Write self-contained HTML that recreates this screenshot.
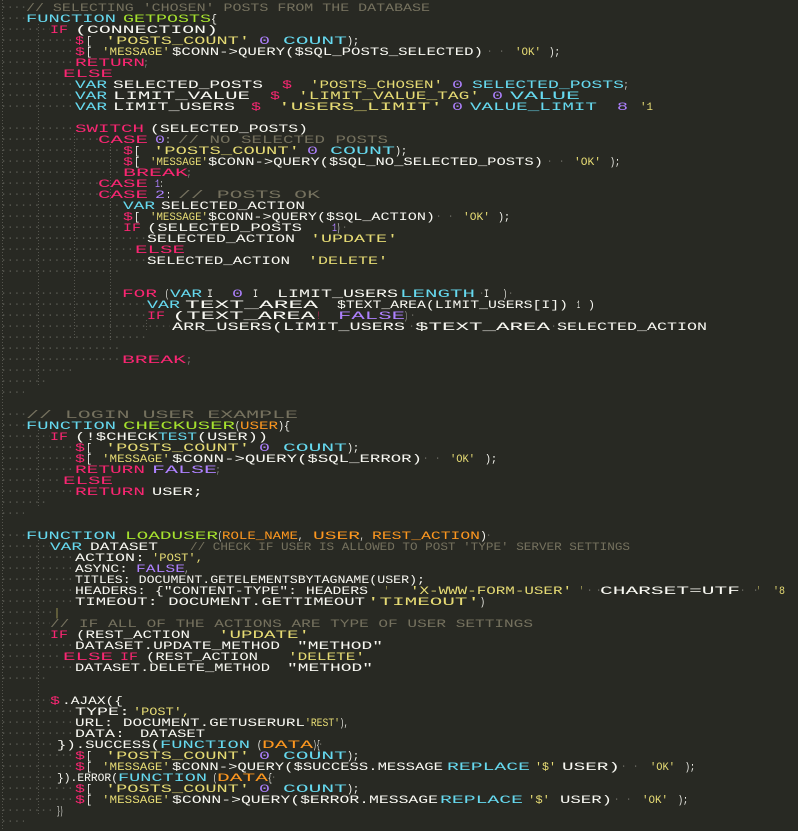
<!DOCTYPE html>
<html lang="en"><head><meta charset="utf-8"><title>Code</title>
<style>
html,body{margin:0;padding:0;background:#282923;width:798px;height:831px;overflow:hidden}
svg{display:block}
text{font-family:"Liberation Mono",monospace;font-size:11px;text-transform:uppercase;white-space:pre}
.c{fill:#66d9ef}.p{fill:#f92672}.y{fill:#e6db74}.w{fill:#f8f8f2}.v{fill:#ae81ff}.g{fill:#a6e22e}.o{fill:#fd971f}.m{fill:#75715e}
</style></head><body>
<svg xmlns="http://www.w3.org/2000/svg" width="798" height="831" viewBox="0 0 798 831">
<defs><pattern id="d" patternUnits="userSpaceOnUse" x="0" y="0" width="6.667" height="11"><rect x="3" y="6.5" width="1.2" height="1.2" fill="#6b6b63"/></pattern></defs>
<g stroke="#55554e" stroke-width="1" stroke-dasharray="1 2">
<path d="M2.5 0V831M38.5 24V386M38.5 430V508M38.5 540V815M74.5 133V340M110.5 144V340M146.5 320V332"/>
</g>
<g fill="url(#d)">
<rect y="0" width="26" height="11"/><rect y="11" width="26" height="11"/><rect y="22" width="50" height="11"/><rect y="33" width="75" height="11"/><rect y="44" width="75" height="11"/><rect y="55" width="75" height="11"/><rect y="66" width="62" height="11"/><rect y="77" width="75" height="11"/><rect y="88" width="75" height="11"/><rect y="99" width="75" height="11"/>
<rect y="121" width="75" height="11"/><rect y="132" width="98" height="11"/><rect y="143" width="122" height="11"/><rect y="154" width="122" height="11"/><rect y="165" width="122" height="11"/><rect y="176" width="98" height="11"/><rect y="187" width="98" height="11"/><rect y="198" width="122" height="11"/><rect y="209" width="122" height="11"/><rect y="220" width="122" height="11"/><rect y="231" width="146" height="11"/><rect y="242" width="134" height="11"/><rect y="253" width="146" height="11"/><rect y="264" width="120" height="11"/>
<rect y="286" width="122" height="11"/><rect y="297" width="146" height="11"/><rect y="308" width="146" height="11"/><rect y="319" width="170" height="11"/><rect y="330" width="145" height="11"/><rect y="341" width="120" height="11"/><rect y="352" width="122" height="11"/><rect y="363" width="72" height="11"/><rect y="374" width="48" height="11"/><rect y="385" width="24" height="11"/>
<rect y="407" width="26" height="11"/><rect y="418" width="26" height="11"/><rect y="429" width="50" height="11"/><rect y="440" width="75" height="11"/><rect y="451" width="75" height="11"/><rect y="462" width="75" height="11"/><rect y="473" width="62" height="11"/><rect y="484" width="75" height="11"/><rect y="495" width="48" height="11"/><rect y="506" width="24" height="11"/>
<rect y="528" width="26" height="11"/><rect y="539" width="50" height="11"/><rect y="550" width="75" height="11"/><rect y="561" width="75" height="11"/><rect y="572" width="75" height="11"/><rect y="583" width="75" height="11"/><rect y="594" width="75" height="11"/><rect y="605" width="55" height="11"/><rect y="616" width="50" height="11"/><rect y="627" width="50" height="11"/><rect y="638" width="75" height="11"/><rect y="649" width="62" height="11"/><rect y="660" width="75" height="11"/><rect y="671" width="48" height="11"/>
<rect y="693" width="50" height="11"/><rect y="704" width="75" height="11"/><rect y="715" width="75" height="11"/><rect y="726" width="75" height="11"/><rect y="737" width="56" height="11"/><rect y="748" width="75" height="11"/><rect y="759" width="75" height="11"/><rect y="770" width="56" height="11"/><rect y="781" width="75" height="11"/><rect y="792" width="75" height="11"/><rect y="803" width="56" height="11"/><rect y="814" width="24" height="11"/>
</g>
<g fill="#77776f">
<rect x="489" y="50.5" width="1.2" height="1.2"/><rect x="501" y="50.5" width="1.2" height="1.2"/><rect x="549" y="160.5" width="1.2" height="1.2"/><rect x="561" y="160.5" width="1.2" height="1.2"/><rect x="438" y="215.5" width="1.2" height="1.2"/><rect x="450" y="215.5" width="1.2" height="1.2"/><rect x="344" y="226.5" width="1.2" height="1.2"/><rect x="481" y="292.5" width="1.2" height="1.2"/><rect x="510" y="292.5" width="1.2" height="1.2"/><rect x="412" y="314.5" width="1.2" height="1.2"/><rect x="411" y="325.5" width="1.2" height="1.2"/><rect x="553" y="325.5" width="1.2" height="1.2"/><rect x="425" y="457.5" width="1.2" height="1.2"/><rect x="437" y="457.5" width="1.2" height="1.2"/><rect x="488" y="534.5" width="1.2" height="1.2"/><rect x="589" y="589.5" width="1.2" height="1.2"/><rect x="598" y="589.5" width="1.2" height="1.2"/><rect x="742" y="589.5" width="1.2" height="1.2"/><rect x="755" y="589.5" width="1.2" height="1.2"/><rect x="320" y="743.5" width="1.2" height="1.2"/><rect x="623" y="765.5" width="1.2" height="1.2"/><rect x="635" y="765.5" width="1.2" height="1.2"/><rect x="273" y="776.5" width="1.2" height="1.2"/><rect x="616" y="798.5" width="1.2" height="1.2"/><rect x="628" y="798.5" width="1.2" height="1.2"/>
</g>
<text class="m" x="26" y="11" textLength="404" lengthAdjust="spacingAndGlyphs">// selecting 'chosen' posts from the database</text>
<text class="c" x="26" y="22" textLength="90" lengthAdjust="spacingAndGlyphs">function</text><text class="g" x="123" y="22" textLength="88" lengthAdjust="spacingAndGlyphs">getPosts</text><text class="w" x="211" y="22" textLength="6" lengthAdjust="spacingAndGlyphs">{</text>
<text class="p" x="50" y="33" textLength="18" lengthAdjust="spacingAndGlyphs">if</text><text class="w" x="75" y="33" textLength="143" lengthAdjust="spacingAndGlyphs">(connection)</text>
<text class="p" x="75" y="44" textLength="9" lengthAdjust="spacingAndGlyphs">$</text><text class="w" x="86" y="44" textLength="6" lengthAdjust="spacingAndGlyphs">[</text><text class="y" x="105" y="44" textLength="145" lengthAdjust="spacingAndGlyphs">'posts_count'</text><text class="v" x="259" y="44" textLength="11" lengthAdjust="spacingAndGlyphs">0</text><text class="c" x="283" y="44" textLength="64" lengthAdjust="spacingAndGlyphs">count</text><text class="w" x="347" y="44" textLength="12" lengthAdjust="spacingAndGlyphs">);</text>
<text class="p" x="75" y="55" textLength="10" lengthAdjust="spacingAndGlyphs">$</text><text class="w" x="86" y="55" textLength="6" lengthAdjust="spacingAndGlyphs">[</text><text class="y" x="102" y="55" textLength="68" lengthAdjust="spacingAndGlyphs">'message'</text><text class="w" x="172" y="55" textLength="311" lengthAdjust="spacingAndGlyphs">$conn-&gt;query($sql_posts_selected)</text><text class="y" x="515" y="55" textLength="26" lengthAdjust="spacingAndGlyphs">'ok'</text><text class="w" x="549" y="55" textLength="11" lengthAdjust="spacingAndGlyphs">);</text>
<text class="p" x="75" y="66" textLength="70" lengthAdjust="spacingAndGlyphs">return</text><text class="w" x="145" y="66" textLength="2" lengthAdjust="spacingAndGlyphs">;</text>
<text class="p" x="63" y="77" textLength="50" lengthAdjust="spacingAndGlyphs">else</text>
<text class="c" x="75" y="88" textLength="32" lengthAdjust="spacingAndGlyphs">var</text><text class="w" x="113" y="88" textLength="150" lengthAdjust="spacingAndGlyphs">selected_posts</text><text class="p" x="282" y="88" textLength="10" lengthAdjust="spacingAndGlyphs">$</text><text class="y" x="310" y="88" textLength="133" lengthAdjust="spacingAndGlyphs">'posts_chosen'</text><text class="v" x="452" y="88" textLength="11" lengthAdjust="spacingAndGlyphs">0</text><text class="c" x="472" y="88" textLength="152" lengthAdjust="spacingAndGlyphs">selected_posts</text><text class="w" x="624" y="88" textLength="4" lengthAdjust="spacingAndGlyphs">;</text>
<text class="c" x="75" y="99" textLength="32" lengthAdjust="spacingAndGlyphs">var</text><text class="w" x="113" y="99" textLength="137" lengthAdjust="spacingAndGlyphs">limit_value</text><text class="p" x="270" y="99" textLength="10" lengthAdjust="spacingAndGlyphs">$</text><text class="y" x="298" y="99" textLength="182" lengthAdjust="spacingAndGlyphs">'limit_value_tag'</text><text class="v" x="492" y="99" textLength="11" lengthAdjust="spacingAndGlyphs">0</text><text class="c" x="510" y="99" textLength="70" lengthAdjust="spacingAndGlyphs">value</text>
<text class="c" x="75" y="110" textLength="32" lengthAdjust="spacingAndGlyphs">var</text><text class="w" x="113" y="110" textLength="122" lengthAdjust="spacingAndGlyphs">limit_users</text><text class="p" x="251" y="110" textLength="10" lengthAdjust="spacingAndGlyphs">$</text><text class="y" x="278" y="110" textLength="165" lengthAdjust="spacingAndGlyphs">'users_limit'</text><text class="v" x="452" y="110" textLength="11" lengthAdjust="spacingAndGlyphs">0</text><text class="c" x="470" y="110" textLength="127" lengthAdjust="spacingAndGlyphs">value_limit</text><text class="v" x="617" y="110" textLength="11" lengthAdjust="spacingAndGlyphs">8</text><text class="y" x="640" y="110" textLength="13" lengthAdjust="spacingAndGlyphs">'1</text>
<text class="p" x="75" y="132" textLength="69" lengthAdjust="spacingAndGlyphs">switch</text><text class="w" x="150" y="132" textLength="158" lengthAdjust="spacingAndGlyphs">(selected_posts)</text>
<text class="p" x="98" y="143" textLength="50" lengthAdjust="spacingAndGlyphs">case</text><text class="v" x="155" y="143" textLength="10" lengthAdjust="spacingAndGlyphs">0</text><text class="w" x="166" y="143" textLength="4" lengthAdjust="spacingAndGlyphs">:</text><text class="m" x="178" y="143" textLength="210" lengthAdjust="spacingAndGlyphs">// no selected posts</text>
<text class="p" x="123" y="154" textLength="10" lengthAdjust="spacingAndGlyphs">$</text><text class="w" x="134" y="154" textLength="6" lengthAdjust="spacingAndGlyphs">[</text><text class="y" x="153" y="154" textLength="147" lengthAdjust="spacingAndGlyphs">'posts_count'</text><text class="v" x="307" y="154" textLength="11" lengthAdjust="spacingAndGlyphs">0</text><text class="c" x="330" y="154" textLength="65" lengthAdjust="spacingAndGlyphs">count</text><text class="w" x="395" y="154" textLength="12" lengthAdjust="spacingAndGlyphs">);</text>
<text class="p" x="123" y="165" textLength="10" lengthAdjust="spacingAndGlyphs">$</text><text class="w" x="134" y="165" textLength="6" lengthAdjust="spacingAndGlyphs">[</text><text class="y" x="150" y="165" textLength="58" lengthAdjust="spacingAndGlyphs">'message'</text><text class="w" x="208" y="165" textLength="335" lengthAdjust="spacingAndGlyphs">$conn-&gt;query($sql_no_selected_posts)</text><text class="y" x="574" y="165" textLength="27" lengthAdjust="spacingAndGlyphs">'ok'</text><text class="w" x="610" y="165" textLength="10" lengthAdjust="spacingAndGlyphs">);</text>
<text class="p" x="123" y="176" textLength="65" lengthAdjust="spacingAndGlyphs">break</text><text class="w" x="188" y="176" textLength="2" lengthAdjust="spacingAndGlyphs">;</text>
<text class="p" x="98" y="187" textLength="50" lengthAdjust="spacingAndGlyphs">case</text><text class="v" x="155" y="187" textLength="5" lengthAdjust="spacingAndGlyphs">1</text><text class="w" x="160" y="187" textLength="3" lengthAdjust="spacingAndGlyphs">:</text>
<text class="p" x="98" y="198" textLength="50" lengthAdjust="spacingAndGlyphs">case</text><text class="v" x="155" y="198" textLength="10" lengthAdjust="spacingAndGlyphs">2</text><text class="w" x="166" y="198" textLength="5" lengthAdjust="spacingAndGlyphs">:</text><text class="m" x="178" y="198" textLength="142" lengthAdjust="spacingAndGlyphs">// posts ok</text>
<text class="c" x="123" y="209" textLength="32" lengthAdjust="spacingAndGlyphs">var</text><text class="w" x="161" y="209" textLength="144" lengthAdjust="spacingAndGlyphs">selected_action</text>
<text class="p" x="123" y="220" textLength="10" lengthAdjust="spacingAndGlyphs">$</text><text class="w" x="134" y="220" textLength="6" lengthAdjust="spacingAndGlyphs">[</text><text class="y" x="150" y="220" textLength="58" lengthAdjust="spacingAndGlyphs">'message'</text><text class="w" x="208" y="220" textLength="227" lengthAdjust="spacingAndGlyphs">$conn-&gt;query($sql_action)</text><text class="y" x="463" y="220" textLength="27" lengthAdjust="spacingAndGlyphs">'ok'</text><text class="w" x="498" y="220" textLength="12" lengthAdjust="spacingAndGlyphs">);</text>
<text class="p" x="123" y="231" textLength="18" lengthAdjust="spacingAndGlyphs">if</text><text class="w" x="147" y="231" textLength="155" lengthAdjust="spacingAndGlyphs">(selected_posts</text><text class="v" x="332" y="231" textLength="5" lengthAdjust="spacingAndGlyphs">1</text><text class="w" x="337" y="231" textLength="3" lengthAdjust="spacingAndGlyphs">)</text>
<text class="w" x="147" y="242" textLength="148" lengthAdjust="spacingAndGlyphs">selected_action</text><text class="y" x="310" y="242" textLength="88" lengthAdjust="spacingAndGlyphs">'update'</text>
<text class="p" x="135" y="253" textLength="50" lengthAdjust="spacingAndGlyphs">else</text>
<text class="w" x="147" y="264" textLength="143" lengthAdjust="spacingAndGlyphs">selected_action</text><text class="y" x="308" y="264" textLength="80" lengthAdjust="spacingAndGlyphs">'delete'</text>
<text class="p" x="122" y="297" textLength="35" lengthAdjust="spacingAndGlyphs">for</text><text class="w" x="165" y="297" textLength="4" lengthAdjust="spacingAndGlyphs">(</text><text class="c" x="170" y="297" textLength="32" lengthAdjust="spacingAndGlyphs">var</text><text class="w" x="207" y="297" textLength="6" lengthAdjust="spacingAndGlyphs">i</text><text class="v" x="232" y="297" textLength="11" lengthAdjust="spacingAndGlyphs">0</text><text class="w" x="253" y="297" textLength="5" lengthAdjust="spacingAndGlyphs">i</text><text class="w" x="277" y="297" textLength="121" lengthAdjust="spacingAndGlyphs">limit_users</text><text class="c" x="400" y="297" textLength="75" lengthAdjust="spacingAndGlyphs">length</text><text class="w" x="484" y="297" textLength="5" lengthAdjust="spacingAndGlyphs">i</text><text class="w" x="503" y="297" textLength="4" lengthAdjust="spacingAndGlyphs">)</text>
<text class="c" x="147" y="308" textLength="33" lengthAdjust="spacingAndGlyphs">var</text><text class="w" x="185" y="308" textLength="133" lengthAdjust="spacingAndGlyphs">text_area</text><text class="w" x="337" y="308" textLength="231" lengthAdjust="spacingAndGlyphs">$text_area(limit_users[i])</text><text class="w" x="577" y="308" textLength="3" lengthAdjust="spacingAndGlyphs">1</text><text class="w" x="588" y="308" textLength="7" lengthAdjust="spacingAndGlyphs">)</text>
<text class="p" x="147" y="319" textLength="18" lengthAdjust="spacingAndGlyphs">if</text><text class="w" x="172" y="319" textLength="143" lengthAdjust="spacingAndGlyphs">(text_area</text><text class="p" x="317" y="319" textLength="3" lengthAdjust="spacingAndGlyphs">!</text><text class="v" x="338" y="319" textLength="67" lengthAdjust="spacingAndGlyphs">false</text><text class="w" x="405" y="319" textLength="2" lengthAdjust="spacingAndGlyphs">)</text>
<text class="w" x="172" y="330" textLength="233" lengthAdjust="spacingAndGlyphs">arr_users(limit_users</text><text class="w" x="415" y="330" textLength="135" lengthAdjust="spacingAndGlyphs">$text_area</text><text class="w" x="557" y="330" textLength="150" lengthAdjust="spacingAndGlyphs">selected_action</text>
<text class="p" x="122" y="363" textLength="64" lengthAdjust="spacingAndGlyphs">break</text><text class="w" x="188" y="363" textLength="2" lengthAdjust="spacingAndGlyphs">;</text>
<text class="m" x="26" y="418" textLength="272" lengthAdjust="spacingAndGlyphs">// login user example</text>
<text class="c" x="26" y="429" textLength="90" lengthAdjust="spacingAndGlyphs">function</text><text class="g" x="123" y="429" textLength="112" lengthAdjust="spacingAndGlyphs">checkUser</text><text class="w" x="235" y="429" textLength="5" lengthAdjust="spacingAndGlyphs">(</text><text class="o" x="240" y="429" textLength="38" lengthAdjust="spacingAndGlyphs">user</text><text class="w" x="278" y="429" textLength="12" lengthAdjust="spacingAndGlyphs">){</text>
<text class="p" x="50" y="440" textLength="18" lengthAdjust="spacingAndGlyphs">if</text><text class="w" x="75" y="440" textLength="83" lengthAdjust="spacingAndGlyphs">(!$check</text><text class="c" x="158" y="440" textLength="39" lengthAdjust="spacingAndGlyphs">test</text><text class="w" x="197" y="440" textLength="71" lengthAdjust="spacingAndGlyphs">(user))</text>
<text class="p" x="75" y="451" textLength="10" lengthAdjust="spacingAndGlyphs">$</text><text class="w" x="86" y="451" textLength="6" lengthAdjust="spacingAndGlyphs">[</text><text class="y" x="105" y="451" textLength="145" lengthAdjust="spacingAndGlyphs">'posts_count'</text><text class="v" x="259" y="451" textLength="11" lengthAdjust="spacingAndGlyphs">0</text><text class="c" x="283" y="451" textLength="64" lengthAdjust="spacingAndGlyphs">count</text><text class="w" x="347" y="451" textLength="12" lengthAdjust="spacingAndGlyphs">);</text>
<text class="p" x="75" y="462" textLength="10" lengthAdjust="spacingAndGlyphs">$</text><text class="w" x="86" y="462" textLength="6" lengthAdjust="spacingAndGlyphs">[</text><text class="y" x="102" y="462" textLength="68" lengthAdjust="spacingAndGlyphs">'message'</text><text class="w" x="172" y="462" textLength="250" lengthAdjust="spacingAndGlyphs">$conn-&gt;query($sql_error)</text><text class="y" x="450" y="462" textLength="25" lengthAdjust="spacingAndGlyphs">'ok'</text><text class="w" x="485" y="462" textLength="12" lengthAdjust="spacingAndGlyphs">);</text>
<text class="p" x="75" y="473" textLength="70" lengthAdjust="spacingAndGlyphs">return</text><text class="v" x="152" y="473" textLength="65" lengthAdjust="spacingAndGlyphs">false</text><text class="w" x="217" y="473" textLength="2" lengthAdjust="spacingAndGlyphs">;</text>
<text class="p" x="63" y="484" textLength="50" lengthAdjust="spacingAndGlyphs">else</text>
<text class="p" x="75" y="495" textLength="70" lengthAdjust="spacingAndGlyphs">return</text><text class="w" x="152" y="495" textLength="51" lengthAdjust="spacingAndGlyphs">user;</text>
<text class="c" x="26" y="539" textLength="90" lengthAdjust="spacingAndGlyphs">function</text><text class="g" x="125" y="539" textLength="93" lengthAdjust="spacingAndGlyphs">loadUser</text><text class="w" x="218" y="539" textLength="4" lengthAdjust="spacingAndGlyphs">(</text><text class="o" x="222" y="539" textLength="76" lengthAdjust="spacingAndGlyphs">role_name</text><text class="w" x="298" y="539" textLength="5" lengthAdjust="spacingAndGlyphs">,</text><text class="o" x="313" y="539" textLength="47" lengthAdjust="spacingAndGlyphs">user</text><text class="w" x="360" y="539" textLength="4" lengthAdjust="spacingAndGlyphs">,</text><text class="o" x="372" y="539" textLength="108" lengthAdjust="spacingAndGlyphs">rest_action</text><text class="w" x="480" y="539" textLength="7" lengthAdjust="spacingAndGlyphs">)</text>
<text class="c" x="50" y="550" textLength="32" lengthAdjust="spacingAndGlyphs">var</text><text class="w" x="90" y="550" textLength="68" lengthAdjust="spacingAndGlyphs">dataset</text><text class="m" x="190" y="550" textLength="440" lengthAdjust="spacingAndGlyphs">// check if user is allowed to post 'type' server settings</text>
<text class="w" x="75" y="561" textLength="70" lengthAdjust="spacingAndGlyphs">action:</text><text class="y" x="152" y="561" textLength="51" lengthAdjust="spacingAndGlyphs">'post',</text>
<text class="w" x="75" y="572" textLength="53" lengthAdjust="spacingAndGlyphs">async:</text><text class="v" x="136" y="572" textLength="49" lengthAdjust="spacingAndGlyphs">false</text><text class="w" x="185" y="572" textLength="3" lengthAdjust="spacingAndGlyphs">,</text>
<text class="w" x="75" y="583" textLength="350" lengthAdjust="spacingAndGlyphs">titles: document.getElementsByTagName(user);</text>
<text class="w" x="75" y="594" textLength="293" lengthAdjust="spacingAndGlyphs">headers: {"Content-Type": headers</text><text class="y" x="385" y="594" textLength="3" lengthAdjust="spacingAndGlyphs">'</text><text class="y" x="410" y="594" textLength="162" lengthAdjust="spacingAndGlyphs">'x-www-form-user'</text><text class="y" x="580" y="594" textLength="3" lengthAdjust="spacingAndGlyphs">'</text><text class="w" x="600" y="594" textLength="140" lengthAdjust="spacingAndGlyphs">charset=utf</text><text class="y" x="757" y="594" textLength="3" lengthAdjust="spacingAndGlyphs">'</text><text class="y" x="773" y="594" textLength="12" lengthAdjust="spacingAndGlyphs">'8</text>
<text class="w" x="75" y="605" textLength="290" lengthAdjust="spacingAndGlyphs">timeout: document.getTimeout</text><text class="y" x="367" y="605" textLength="113" lengthAdjust="spacingAndGlyphs">'timeout'</text><text class="w" x="480" y="605" textLength="5" lengthAdjust="spacingAndGlyphs">)</text>
<text class="y" x="55" y="616" textLength="4" lengthAdjust="spacingAndGlyphs">|</text>
<text class="m" x="50" y="627" textLength="483" lengthAdjust="spacingAndGlyphs">// if all of the actions are type of user settings</text>
<text class="p" x="50" y="638" textLength="18" lengthAdjust="spacingAndGlyphs">if</text><text class="w" x="76" y="638" textLength="114" lengthAdjust="spacingAndGlyphs">(rest_action</text><text class="y" x="218" y="638" textLength="92" lengthAdjust="spacingAndGlyphs">'update'</text>
<text class="w" x="75" y="649" textLength="205" lengthAdjust="spacingAndGlyphs">dataset.update_method</text><text class="w" x="297" y="649" textLength="86" lengthAdjust="spacingAndGlyphs">"method"</text>
<text class="p" x="63" y="660" textLength="50" lengthAdjust="spacingAndGlyphs">else</text><text class="p" x="120" y="660" textLength="18" lengthAdjust="spacingAndGlyphs">if</text><text class="w" x="146" y="660" textLength="112" lengthAdjust="spacingAndGlyphs">(rest_action</text><text class="y" x="288" y="660" textLength="77" lengthAdjust="spacingAndGlyphs">'delete'</text>
<text class="w" x="75" y="671" textLength="195" lengthAdjust="spacingAndGlyphs">dataset.delete_method</text><text class="w" x="287" y="671" textLength="86" lengthAdjust="spacingAndGlyphs">"method"</text>
<text class="p" x="50" y="704" textLength="10" lengthAdjust="spacingAndGlyphs">$</text><text class="w" x="62" y="704" textLength="61" lengthAdjust="spacingAndGlyphs">.ajax({</text>
<text class="w" x="75" y="715" textLength="55" lengthAdjust="spacingAndGlyphs">type:</text><text class="y" x="133" y="715" textLength="57" lengthAdjust="spacingAndGlyphs">'post',</text>
<text class="w" x="75" y="726" textLength="230" lengthAdjust="spacingAndGlyphs">url: document.getUserUrl</text><text class="y" x="305" y="726" textLength="35" lengthAdjust="spacingAndGlyphs">'rest'</text><text class="w" x="340" y="726" textLength="8" lengthAdjust="spacingAndGlyphs">),</text>
<text class="w" x="75" y="737" textLength="50" lengthAdjust="spacingAndGlyphs">data:</text><text class="w" x="140" y="737" textLength="65" lengthAdjust="spacingAndGlyphs">dataset</text>
<text class="w" x="57" y="748" textLength="103" lengthAdjust="spacingAndGlyphs">}).success(</text><text class="c" x="160" y="748" textLength="90" lengthAdjust="spacingAndGlyphs">function</text><text class="w" x="257" y="748" textLength="5" lengthAdjust="spacingAndGlyphs">(</text><text class="o" x="262" y="748" textLength="51" lengthAdjust="spacingAndGlyphs">data</text><text class="w" x="313" y="748" textLength="7" lengthAdjust="spacingAndGlyphs">){</text>
<text class="p" x="75" y="759" textLength="10" lengthAdjust="spacingAndGlyphs">$</text><text class="w" x="86" y="759" textLength="6" lengthAdjust="spacingAndGlyphs">[</text><text class="y" x="105" y="759" textLength="145" lengthAdjust="spacingAndGlyphs">'posts_count'</text><text class="v" x="259" y="759" textLength="11" lengthAdjust="spacingAndGlyphs">0</text><text class="c" x="283" y="759" textLength="64" lengthAdjust="spacingAndGlyphs">count</text><text class="w" x="347" y="759" textLength="12" lengthAdjust="spacingAndGlyphs">);</text>
<text class="p" x="75" y="770" textLength="10" lengthAdjust="spacingAndGlyphs">$</text><text class="w" x="86" y="770" textLength="6" lengthAdjust="spacingAndGlyphs">[</text><text class="y" x="102" y="770" textLength="68" lengthAdjust="spacingAndGlyphs">'message'</text><text class="w" x="172" y="770" textLength="271" lengthAdjust="spacingAndGlyphs">$conn-&gt;query($success.message</text><text class="c" x="447" y="770" textLength="83" lengthAdjust="spacingAndGlyphs">replace</text><text class="y" x="535" y="770" textLength="21" lengthAdjust="spacingAndGlyphs">'$'</text><text class="w" x="562" y="770" textLength="58" lengthAdjust="spacingAndGlyphs">user)</text><text class="y" x="650" y="770" textLength="25" lengthAdjust="spacingAndGlyphs">'ok'</text><text class="w" x="685" y="770" textLength="10" lengthAdjust="spacingAndGlyphs">);</text>
<text class="w" x="57" y="781" textLength="61" lengthAdjust="spacingAndGlyphs">}).error(</text><text class="c" x="118" y="781" textLength="89" lengthAdjust="spacingAndGlyphs">function</text><text class="w" x="213" y="781" textLength="4" lengthAdjust="spacingAndGlyphs">(</text><text class="o" x="217" y="781" textLength="51" lengthAdjust="spacingAndGlyphs">data</text><text class="w" x="268" y="781" textLength="4" lengthAdjust="spacingAndGlyphs">{</text>
<text class="p" x="75" y="792" textLength="10" lengthAdjust="spacingAndGlyphs">$</text><text class="w" x="86" y="792" textLength="6" lengthAdjust="spacingAndGlyphs">[</text><text class="y" x="105" y="792" textLength="145" lengthAdjust="spacingAndGlyphs">'posts_count'</text><text class="v" x="259" y="792" textLength="11" lengthAdjust="spacingAndGlyphs">0</text><text class="c" x="283" y="792" textLength="64" lengthAdjust="spacingAndGlyphs">count</text><text class="w" x="347" y="792" textLength="12" lengthAdjust="spacingAndGlyphs">);</text>
<text class="p" x="75" y="803" textLength="10" lengthAdjust="spacingAndGlyphs">$</text><text class="w" x="86" y="803" textLength="6" lengthAdjust="spacingAndGlyphs">[</text><text class="y" x="102" y="803" textLength="68" lengthAdjust="spacingAndGlyphs">'message'</text><text class="w" x="172" y="803" textLength="266" lengthAdjust="spacingAndGlyphs">$conn-&gt;query($error.message</text><text class="c" x="440" y="803" textLength="83" lengthAdjust="spacingAndGlyphs">replace</text><text class="y" x="528" y="803" textLength="22" lengthAdjust="spacingAndGlyphs">'$'</text><text class="w" x="560" y="803" textLength="52" lengthAdjust="spacingAndGlyphs">user)</text><text class="y" x="642" y="803" textLength="26" lengthAdjust="spacingAndGlyphs">'ok'</text><text class="w" x="678" y="803" textLength="10" lengthAdjust="spacingAndGlyphs">);</text>
<text class="w" x="57" y="814" textLength="6" lengthAdjust="spacingAndGlyphs">})</text>
</svg>
</body></html>
